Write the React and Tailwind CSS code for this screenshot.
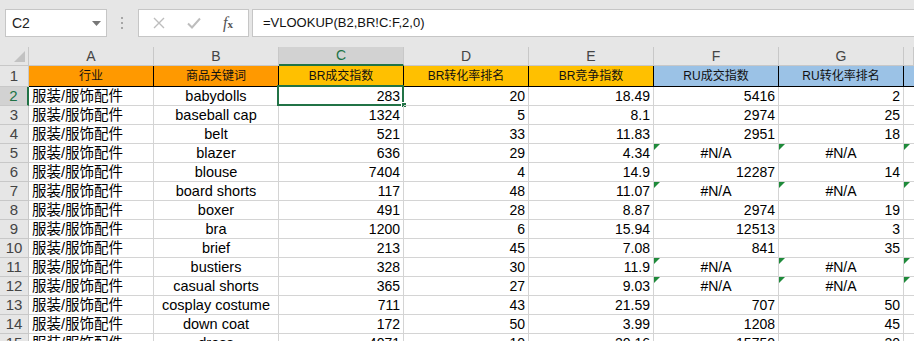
const rows = [
  ['babydolls', '283', '20', '18.49', '5416', '2'],
  ['baseball cap', '1324', '5', '8.1', '2974', '25'],
  ['belt', '521', '33', '11.83', '2951', '18'],
  ['blazer', '636', '29', '4.34', '#N/A', '#N/A'],
  ['blouse', '7404', '4', '14.9', '12287', '14'],
  ['board shorts', '117', '48', '11.07', '#N/A', '#N/A'],
  ['boxer', '491', '28', '8.87', '2974', '19'],
  ['bra', '1200', '6', '15.94', '12513', '3'],
  ['brief', '213', '45', '7.08', '841', '35'],
  ['bustiers', '328', '30', '11.9', '#N/A', '#N/A'],
  ['casual shorts', '365', '27', '9.03', '#N/A', '#N/A'],
  ['cosplay costume', '711', '43', '21.59', '707', '50'],
  ['down coat', '172', '50', '3.99', '1208', '45'],
  ['dress', '4071', '10', '20.16', '15750', '20'],
];

const heads = [
  { label: '行业', bg: 'bg-[#ff9900]' },
  { label: '商品关键词', bg: 'bg-[#ff9900]' },
  { label: 'BR成交指数', bg: 'bg-[#ffc000]' },
  { label: 'BR转化率排名', bg: 'bg-[#ffc000]' },
  { label: 'BR竞争指数', bg: 'bg-[#ffc000]' },
  { label: 'RU成交指数', bg: 'bg-[#9bc2e6]' },
  { label: 'RU转化率排名', bg: 'bg-[#9bc2e6]' },
];

const font = "font-['Liberation_Sans','Noto_Sans_CJK_SC',sans-serif]";

function Flag() {
  return (
    <svg className="absolute left-0 top-0" width="6" height="6" viewBox="0 0 6 6">
      <polygon points="0,0 6,0 0,6" fill="#1e8a3a" />
    </svg>
  );
}

function Cell({ children, align = 'right', flag = false, className = '' }) {
  const justify = align === 'left' ? 'justify-start pl-[3px]' : align === 'center' ? 'justify-center' : 'justify-end pr-[3px]';
  return (
    <div className={`relative flex items-end h-[19px] border-r border-b border-[#d4d4d4] overflow-hidden whitespace-nowrap ${justify} ${className}`}>
      {flag && <Flag />}
      <span className="leading-[15px] pb-[1px]">{children}</span>
    </div>
  );
}

export default function App() {
  return (
    <div className={`w-[914px] h-[341px] overflow-hidden bg-white text-black ${font}`}>
      {/* formula bar */}
      <div className="h-[47px] bg-[#e6e6e6] flex items-start pt-[9px] pl-[5px] gap-0">
        <div className="w-[102px] h-[28px] bg-white border border-[#c6c6c6] flex items-center justify-between pl-[6px] pr-[5px]">
          <span className="text-[14px] text-[#222]">C2</span>
          <svg width="9" height="5" viewBox="0 0 9 5"><polygon points="0,0 9,0 4.5,5" fill="#777" /></svg>
        </div>
        <div className="w-[31px] h-[28px] flex items-center justify-center">
          <svg width="3" height="12" viewBox="0 0 3 12">
            <rect x="0" y="0" width="2" height="2" fill="#a6a6a6" />
            <rect x="0" y="5" width="2" height="2" fill="#a6a6a6" />
            <rect x="0" y="10" width="2" height="2" fill="#a6a6a6" />
          </svg>
        </div>
        <div className="w-[111px] h-[28px] bg-white border border-[#c6c6c6] flex items-center pl-[14px]">
          <svg width="12" height="12" viewBox="0 0 12 12">
            <path d="M1 1 L11 11 M11 1 L1 11" stroke="#bdbdbd" strokeWidth="1.4" fill="none" />
          </svg>
          <svg className="ml-[22px]" width="14" height="12" viewBox="0 0 14 12">
            <path d="M1 6.5 L5 10.5 L13 1.5" stroke="#bdbdbd" strokeWidth="2" fill="none" />
          </svg>
          <span className="ml-[22px] text-[#555] font-['Liberation_Serif',serif] italic text-[16px] leading-none">
            f<span className="text-[11px] not-italic font-bold">x</span>
          </span>
        </div>
        <div className="ml-[3px] flex-1 h-[28px] bg-white border border-r-0 border-[#c6c6c6] flex items-center pl-[10px]">
          <span className="text-[13px] text-[#111]">=VLOOKUP(B2,BR!C:F,2,0)</span>
        </div>
      </div>

      {/* sheet */}
      <div className="grid grid-cols-[29px_repeat(7,125px)_1fr]">
        {/* column headers */}
        <div className="h-[19px] bg-[#e6e6e6] border-r border-b border-[#c8c8c8] flex items-end justify-end pr-[3px] pb-[3px]">
          <svg width="11" height="11" viewBox="0 0 11 11"><polygon points="11,0 11,11 0,11" fill="#c2c2c2" /></svg>
        </div>
        {['A', 'B', 'C', 'D', 'E', 'F', 'G', ''].map((l, i) =>
          l === 'C' ? (
            <div key={i} className="h-[19px] bg-[#d2d2d2] border-r border-[#c8c8c8] border-b-2 border-b-[#217346] flex items-center justify-center text-[14px] text-[#217346]">
              {l}
            </div>
          ) : (
            <div key={i} className="h-[19px] bg-[#e6e6e6] border-r border-b border-[#c8c8c8] flex items-center justify-center text-[14px] text-[#444]">
              {l}
            </div>
          )
        )}

        {/* row 1 */}
        <div className="h-[21px] bg-[#e6e6e6] border-r border-b border-[#c8c8c8] flex items-center justify-center text-[15px] text-[#444]">1</div>
        {heads.map((h) => (
          <div key={h.label} className={`h-[21px] ${h.bg} border-r border-b border-black flex items-end justify-center pb-[2px] text-[12px] leading-[15px] text-[#111]`}>
            {h.label}
          </div>
        ))}
        <div className="h-[21px] bg-[#9bc2e6] border-b border-black" />

        {/* data rows */}
        {rows.map((r, i) => {
          const n = i + 2;
          const na = r[4] === '#N/A';
          const sel = n === 2;
          return [
            <div
              key={`h${n}`}
              className={`h-[19px] border-b border-[#c8c8c8] flex items-center justify-center text-[15px] ${sel ? 'bg-[#d2d2d2] border-r-2 border-r-[#217346] text-[#217346]' : 'bg-[#e6e6e6] border-r text-[#444]'}`}
            >
              {n}
            </div>,
            <Cell key={`a${n}`} align="left" className="text-[14.5px]">服装/服饰配件</Cell>,
            <Cell key={`b${n}`} align="center" className="text-[14.5px]">{r[0]}</Cell>,
            <Cell key={`c${n}`} className="text-[14px] overflow-visible">
              {r[1]}
              {sel && (
                <>
                  <span className="absolute left-[-2px] top-[-2px] w-[127px] h-[21px] border-2 border-[#217346]" />
                  <span className="absolute right-[-4px] bottom-[-3px] w-[6px] h-[6px] bg-[#217346] border border-white" />
                </>
              )}
            </Cell>,
            <Cell key={`d${n}`} className="text-[14px]">{r[2]}</Cell>,
            <Cell key={`e${n}`} className="text-[14px]">{r[3]}</Cell>,
            <Cell key={`f${n}`} align={na ? 'center' : 'right'} flag={na} className="text-[14px]">{r[4]}</Cell>,
            <Cell key={`g${n}`} align={na ? 'center' : 'right'} flag={na} className="text-[14px]">{r[5]}</Cell>,
            <Cell key={`x${n}`} flag={na} className="border-r-0" />,
          ];
        })}
      </div>
    </div>
  );
}
